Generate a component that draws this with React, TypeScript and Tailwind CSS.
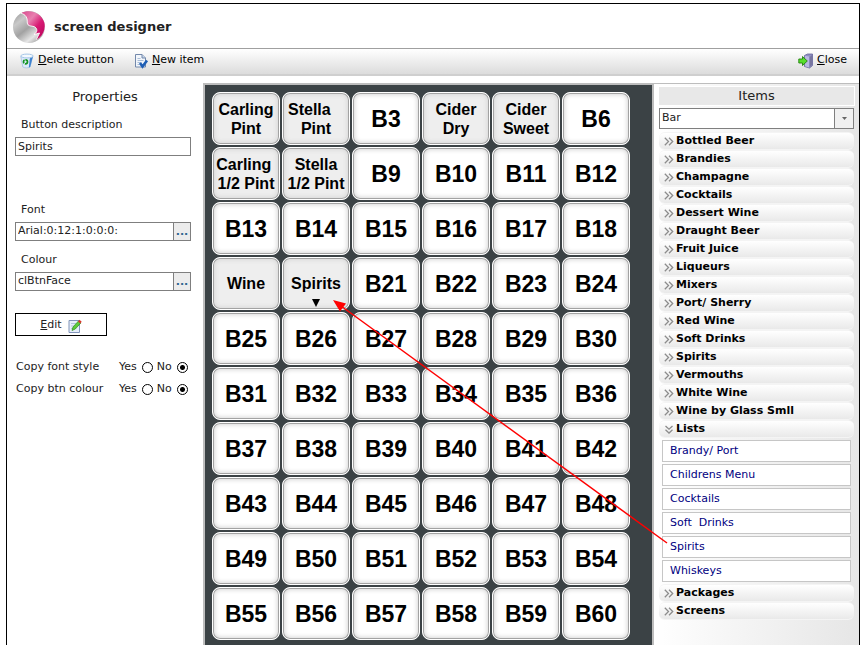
import { Fragment, useState } from 'react'

interface ScreenButton {
  label: string
  custom?: boolean
  hasList?: boolean
}

const customButtons: Record<number, ScreenButton> = {
  1: { label: 'Carling\nPint', custom: true },
  2: { label: 'Stella   \nPint', custom: true },
  4: { label: 'Cider\nDry', custom: true },
  5: { label: 'Cider\nSweet', custom: true },
  7: { label: 'Carling \n1/2 Pint', custom: true },
  8: { label: 'Stella\n1/2 Pint', custom: true },
  19: { label: 'Wine', custom: true },
  20: { label: 'Spirits', custom: true, hasList: true },
}

const screenButtons: ScreenButton[] = Array.from(
  { length: 60 },
  (_, i) => customButtons[i + 1] ?? { label: `B${i + 1}` },
)

const categories = [
  'Bottled Beer',
  'Brandies',
  'Champagne',
  'Cocktails',
  'Dessert Wine',
  'Draught Beer',
  'Fruit Juice',
  'Liqueurs',
  'Mixers',
  'Port/ Sherry',
  'Red Wine',
  'Soft Drinks',
  'Spirits',
  'Vermouths',
  'White Wine',
  'Wine by Glass Smll',
  'Lists',
  'Packages',
  'Screens',
]

const lists = ['Brandy/ Port', 'Childrens Menu', 'Cocktails', 'Soft  Drinks', 'Spirits', 'Whiskeys']

function Logo() {
  return (
    <svg width="34" height="34" viewBox="0 0 34 34" aria-hidden="true">
      <defs>
        <linearGradient id="silver" x1="0" y1="0" x2="0.8" y2="1">
          <stop offset="0" stopColor="#8d8d8d" />
          <stop offset="0.3" stopColor="#c9c9c9" />
          <stop offset="0.55" stopColor="#a2a2a2" />
          <stop offset="0.8" stopColor="#e6e6e6" />
          <stop offset="1" stopColor="#999" />
        </linearGradient>
        <linearGradient id="pink" x1="0" y1="0" x2="1" y2="1">
          <stop offset="0" stopColor="#d9478c" />
          <stop offset="0.35" stopColor="#e880b0" />
          <stop offset="0.6" stopColor="#d81b74" />
          <stop offset="1" stopColor="#b80058" />
        </linearGradient>
      </defs>
      <circle cx="17" cy="17" r="16" fill="url(#silver)" />
      <path
        d="M9 3.200C18-1.500 29 2.500 32.300 12.500c1.500 6-.8 11.500-5 15.200l-3 2 3.200-6.700-5.500 1.500c3-2 3.500-4.500 2-6.500-2-2.800-6-1-8-3.200-1.700-2 .3-5-2-8.300-1.200-1.800-3-2.600-5-3.300z"
        fill="url(#pink)"
      />
      <path
        d="M9 3.200c2 .7 3.800 1.500 5 3.300 2.300 3.300.3 6.300 2 8.300 2 2.200 6 .4 8 3.200 1.500 2 1 4.500-2 6.500l5.500-1.500-3.200 6.700"
        fill="none"
        stroke="#fff"
        strokeWidth="0.9"
      />
    </svg>
  )
}

function BinIcon() {
  return (
    <svg width="16" height="16" viewBox="0 0 16 16" aria-hidden="true">
      <path d="M1.800 3.500l2 10.500c2 1.200 5.200 1.200 7.200 0l2.700-10.500z" fill="#dceafa" stroke="#9dbde0" strokeWidth="0.7" />
      <path d="M10.800 5.500L9.800 14.600l1.400-.6L14 3.300z" fill="#3f83d0" />
      <ellipse cx="8" cy="3" rx="6.200" ry="1.900" fill="#f4f9fe" stroke="#9bbfe4" strokeWidth="0.9" />
      <circle cx="6.500" cy="8.800" r="2" fill="none" stroke="#149321" strokeWidth="1.700" strokeDasharray="3.400 0.800" />
    </svg>
  )
}

function NewItemIcon() {
  return (
    <svg width="16" height="16" viewBox="0 0 16 16" aria-hidden="true">
      <path d="M2.500 1.500h6.500l3.500 3.500v9h-10z" fill="#f2f6fb" stroke="#7288ab" />
      <path d="M9 1.500v3.500h3.500" fill="#c9d8ea" stroke="#7288ab" />
      <path d="M4.500 5.500h3M4.500 7.500h6M4.500 9.500h4M4.500 11.500h2" stroke="#a9bcd6" />
      <path d="M7 10l2.500 3.500L14 7.500" fill="none" stroke="#1f5fb5" strokeWidth="2.600" />
    </svg>
  )
}

function ExitIcon() {
  return (
    <svg width="16" height="16" viewBox="0 0 16 16" aria-hidden="true">
      <path d="M6.500 2.500l3-1.500h5v11.500l-3 2.500-5-1.500z" fill="#8f8ec4" stroke="#66659a" strokeWidth="0.8" />
      <path d="M7 2.700l4 .8v11L7 13.200z" fill="#b9b8e2" />
      <path d="M11.800 4v10l2.200-1.900V2z" fill="#77769f" />
      <path d="M.8 6h3.700V3.500L9.300 8l-4.800 4.500V10H.8z" fill="#58de2c" stroke="#23830f" strokeWidth="0.9" />
    </svg>
  )
}

function EditIcon() {
  return (
    <svg width="14" height="14" viewBox="0 0 14 14" aria-hidden="true">
      <path d="M1 1.500h10.500v12H1z" fill="#e6eefa" stroke="#8195ba" />
      <path d="M3 4.500h5M3 7h4M3 9.500h3" stroke="#b4c4de" />
      <path d="M4 11.500l1-3.500 5.500-6 2.300 2L7.300 10z" fill="#5ccc3a" stroke="#2b8a1b" strokeWidth="0.7" />
      <path d="M10 2.400L11.500.7l2.200 2-1.400 1.800z" fill="#d9352b" />
    </svg>
  )
}

function Chevrons({ open }: { open: boolean }) {
  return (
    <svg
      width="10"
      height="9"
      viewBox="0 0 10 9"
      fill="none"
      stroke="#8c8c8c"
      strokeWidth="1.300"
      className="shrink-0"
      aria-hidden="true"
    >
      {open ? (
        <path d="M1.500 1L5 4.200 8.500 1M1.500 4.800L5 8l3.500-3.200" />
      ) : (
        <path d="M.8.8l3.700 3.700L.8 8.200M5 .8l3.700 3.700L5 8.200" />
      )}
    </svg>
  )
}

interface PickerFieldProps {
  id: string
  label: string
  defaultValue: string
}

function PickerField({ id, label, defaultValue }: PickerFieldProps) {
  return (
    <div>
      <label htmlFor={id} className="block pl-1.5 leading-4">
        {label}
      </label>
      <div className="mt-1 flex h-[19px] border border-[#7f7f7f]">
        <input id={id} defaultValue={defaultValue} className="min-w-0 flex-1 px-0.5 outline-none" />
        <button
          type="button"
          aria-label={`Choose ${label}`}
          className="w-[17px] border-l border-[#7f7f7f] bg-[#ececec] font-bold leading-4 text-[#2f6690]"
        >
          ...
        </button>
      </div>
    </div>
  )
}

function YesNo({ name, label }: { name: string; label: string }) {
  const radio =
    'size-[11px] appearance-none rounded-full border border-black bg-white checked:bg-[radial-gradient(circle,#000_0_2px,#fff_3px)]'
  return (
    <fieldset className="flex h-[22px] items-center pl-px">
      <legend className="float-left w-[103px]">{label}</legend>
      <label className="flex items-center gap-[5px]">
        Yes
        <input type="radio" name={name} className={radio} />
      </label>
      <label className="ml-1 flex items-center gap-[5px]">
        No
        <input type="radio" name={name} defaultChecked className={radio} />
      </label>
    </fieldset>
  )
}

function PropertiesPanel() {
  return (
    <form className="w-[196px] shrink-0 pt-1.5 pr-3 pl-2">
      <h2 className="pl-1 text-center text-[13px] leading-4">Properties</h2>
      <label htmlFor="description" className="mt-3 block pl-1.5 leading-4">
        Button description
      </label>
      <input
        id="description"
        defaultValue="Spirits"
        className="mt-1 block h-[19px] w-full border border-[#7f7f7f] px-0.5 outline-none"
      />
      <div className="mt-[46px] flex flex-col gap-[11px]">
        <PickerField id="font" label="Font" defaultValue="Arial:0:12:1:0:0:0:" />
        <PickerField id="colour" label="Colour" defaultValue="clBtnFace" />
      </div>
      <button
        type="button"
        className="mt-[22px] mb-5 flex h-[23px] w-[92px] items-center justify-center gap-1.5 border border-black pt-0.5"
      >
        <span>
          <u>E</u>dit
        </span>
        <EditIcon />
      </button>
      <YesNo name="copy-font" label="Copy font style" />
      <YesNo name="copy-colour" label="Copy btn colour" />
    </form>
  )
}

function ButtonGrid() {
  return (
    <div className="w-[451px] shrink-0 border-2 border-b-0 border-[#bdbdbd] bg-[#3b4245]">
      <div className="grid grid-cols-[repeat(6,68px)] gap-0.5 p-[7px] font-['Liberation_Sans',Arial,sans-serif] font-bold text-black">
        {screenButtons.map((button, i) => (
          <button
            key={i}
            type="button"
            className={`relative h-[53px] rounded-lg border border-white shadow-[inset_0_0_0_1px_#a3a3a3,inset_0_0_4px_2px_#d8d8d8] ${
              button.custom
                ? 'bg-[#eeeeee] text-base leading-[19px] whitespace-pre'
                : 'bg-white pt-0.5 text-[23px]'
            }`}
          >
            {button.label}
            {button.hasList && (
              <svg width="8" height="8" viewBox="0 0 8 8" className="absolute bottom-0.5 left-[29px]">
                <path d="M0 0h8L4 8z" />
              </svg>
            )}
          </button>
        ))}
      </div>
    </div>
  )
}

function ItemsPanel() {
  const [openCategory, setOpenCategory] = useState('Lists')

  return (
    <aside className="min-w-0 flex-1 border-t border-[#bdbdbd] bg-linear-to-r from-white to-[#e6e6e6] px-[5px] pt-[3px]">
      <h2 className="bg-[#e8e8e8] text-center text-[13px] leading-[18px] outline-1 outline-white">
        Items
      </h2>
      <div className="relative mt-[3px]">
        <select
          aria-label="Item group"
          className="block h-[21px] w-full appearance-none border border-[#7f7f7f] bg-white px-0.5 outline-none"
        >
          <option>Bar</option>
        </select>
        <span className="pointer-events-none absolute top-px right-px bottom-px flex w-[19px] items-center justify-center border-l border-[#7f7f7f] bg-[#f0f0f0]">
          <svg width="5" height="3" viewBox="0 0 5 3" fill="#666">
            <path d="M0 0h5L2.500 3z" />
          </svg>
        </span>
      </div>
      <div className="mt-[3px]">
        {categories.map((category) => (
          <Fragment key={category}>
            <button
              type="button"
              onClick={() => setOpenCategory(category === openCategory ? '' : category)}
              className="flex h-[18px] w-full items-center gap-0.5 rounded-md border-y border-[#f4f4f4] bg-linear-to-b from-white to-[#e9e9e9] pl-[5px] font-bold text-black"
            >
              <Chevrons open={category === openCategory} />
              {category}
            </button>
            {category === 'Lists' && openCategory === 'Lists' && (
              <ul className="flex flex-col gap-0.5 px-[3px] py-0.5">
                {lists.map((list) => (
                  <li key={list}>
                    <a
                      href="#"
                      className="block h-[22px] border border-[#c6c6c6] bg-white pl-[7px] leading-5 whitespace-pre text-[#000080]"
                    >
                      {list}
                    </a>
                  </li>
                ))}
              </ul>
            )}
          </Fragment>
        ))}
      </div>
    </aside>
  )
}

export default function App() {
  return (
    <div className="h-screen overflow-hidden bg-white pt-[3px] pr-[5px] pl-1.5 font-['DejaVu_Sans',Verdana,sans-serif] text-[11px] text-[#222]">
      <div className="flex min-h-full flex-col border border-b-0 border-black">
        <header className="flex h-11 items-center gap-2 pl-[5px] pt-0.5">
          <Logo />
          <h1 className="text-[13px] font-bold">screen designer</h1>
        </header>
        <nav className="flex h-7 items-center border-t border-b-2 border-t-[#a0a0a0] border-b-[#cfcfcf] bg-linear-to-b from-white to-[#dcdcdc] px-3 pb-0.5 text-black">
          <button type="button" className="flex items-center gap-[3px]">
            <BinIcon />
            <span>
              <u>D</u>elete button
            </span>
          </button>
          <button type="button" className="ml-[19px] flex items-center gap-[3px]">
            <NewItemIcon />
            <span>
              <u>N</u>ew item
            </span>
          </button>
          <button type="button" className="ml-auto flex items-center gap-[3px]">
            <ExitIcon />
            <span>
              <u>C</u>lose
            </span>
          </button>
        </nav>
        <main className="relative mt-[7px] flex flex-1">
          <PropertiesPanel />
          <ButtonGrid />
          <ItemsPanel />
          {/* link from the list to the button that opens it */}
          <svg
            width="336"
            height="246"
            viewBox="0 0 336 246"
            className="pointer-events-none absolute top-[217px] left-[326px]"
            aria-hidden="true"
          >
            <path d="M8 6L334 243" stroke="#f00" strokeWidth="1.500" />
            <path d="M0 0l13 3.500-6 8z" fill="#f00" />
          </svg>
        </main>
      </div>
    </div>
  )
}
